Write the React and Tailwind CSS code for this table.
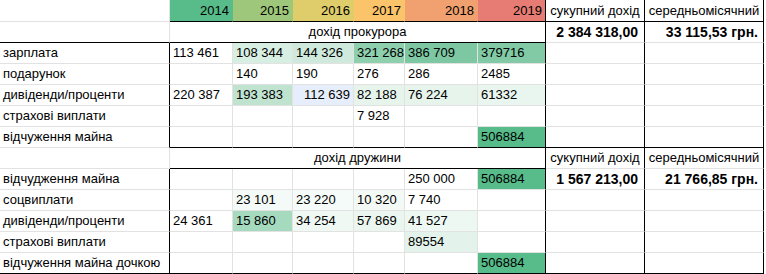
import React from 'react';

const years = [
  ['2014', 'bg-[#57bb8a]'],
  ['2015', 'bg-[#9ec77b]'],
  ['2016', 'bg-[#dfcd6b]'],
  ['2017', 'bg-[#fbc36a]'],
  ['2018', 'bg-[#f1a06f]'],
  ['2019', 'bg-[#e67c73]'],
];

// [text, bg, alignRight]
const prosecutor = [
  ['зарплата', [['113 461'], ['108 344', 'bg-[#d7eee2]'], ['144 326', 'bg-[#cfeadc]'], ['321 268', 'bg-[#8ecfae]'], ['386 709', 'bg-[#7dc8a2]'], ['379716', 'bg-[#82caa6]']]],
  ['подарунок', [[''], ['140'], ['190'], ['276'], ['286'], ['2485']]],
  ['дивіденди/проценти', [['220 387'], ['193 383', 'bg-[#c0e3d0]'], ['112 639', 'bg-[#e7eefb]', true], ['82 188', 'bg-[#e6f4ec]'], ['76 224', 'bg-[#e6f4ec]'], ['61332', 'bg-[#e9f5ef]']]],
  ['страхові виплати', [[''], [''], [''], ['7 928'], [''], ['']]],
  ['відчуження майна', [[''], [''], [''], [''], [''], ['506884', 'bg-[#57bb8a]']]],
];

const wife = [
  ['відчудження майна', [[''], [''], [''], [''], ['250 000'], ['506884', 'bg-[#57bb8a]']]],
  ['соцвиплати', [[''], ['23 101', 'bg-[#f4faf7]'], ['23 220', 'bg-[#f5fbf8]'], ['10 320', 'bg-[#f3faf6]'], ['7 740'], ['']]],
  ['дивіденди/проценти', [['24 361'], ['15 860', 'bg-[#a6dabe]'], ['34 254', 'bg-[#f0f8f4]'], ['57 869', 'bg-[#eaf6ef]'], ['41 527', 'bg-[#eef8f3]'], ['']]],
  ['страхові виплати', [[''], [''], [''], [''], ['89554', 'bg-[#e3f2ea]'], ['']]],
  ['відчуження майна дочкою', [[''], [''], [''], [''], [''], ['506884', 'bg-[#57bb8a]']]],
];

const Cell = ({ children, className = '', black = false, rightBlack = false, span = '' }) => (
  <div
    className={`flex items-center overflow-visible whitespace-nowrap border-b border-r ${
      black ? 'border-b-black' : 'border-b-[#e2e2e2]'
    } ${rightBlack ? 'border-r-black' : 'border-r-[#e2e2e2]'} ${span} ${className}`}
  >
    {children}
  </div>
);

const Summary = ({ total, monthly }) => (
  <>
    <Cell rightBlack className="justify-end pr-[6px] font-bold text-[14px]">{total}</Cell>
    <Cell rightBlack className="justify-end pr-[5px] font-bold text-[14px]">{monthly}</Cell>
  </>
);

const SummaryHead = ({ black }) => (
  <>
    <Cell black={black} rightBlack className="justify-center">сукупний дохід</Cell>
    <Cell black={black} rightBlack className="justify-center">середньомісячний</Cell>
  </>
);

// lastLine: 'none' | 'data' (cols 1..8) | 'all'
const DataRows = ({ rows, lastLine, summaryFirst }) =>
  rows.map(([label, cells], i) => {
    const last = i === rows.length - 1;
    const lineData = last && lastLine !== 'none';
    const lineLabel = last && lastLine === 'all';
    return (
      <React.Fragment key={label + i}>
        <Cell black={lineLabel} rightBlack className="pl-[3px]">{label}</Cell>
        {cells.map(([t, bg = 'bg-white', right], j) => (
          <Cell
            key={j}
            black={lineData}
            rightBlack={j === 5}
            className={`${bg} ${right ? 'justify-end pr-[3px]' : 'pl-[3px]'}`}
          >
            {t}
          </Cell>
        ))}
        {i === 0 && summaryFirst ? (
          <Summary total={summaryFirst[0]} monthly={summaryFirst[1]} />
        ) : (
          <>
            <Cell black={lineData} rightBlack />
            <Cell black={lineData} rightBlack />
          </>
        )}
      </React.Fragment>
    );
  });

export default function App() {
  return (
    <div className="w-[766px] h-[274px] bg-white overflow-hidden text-[13px] text-black font-['Liberation_Sans',Arial,sans-serif]">
      <div className="grid grid-cols-[170px_63px_60px_61px_51px_73px_68px_99px_119px] grid-rows-[22px_repeat(12,21px)]">
        {/* year header */}
        <Cell />
        {years.map(([y, bg], j) => (
          <Cell key={y} black rightBlack={j === 5} className={`${bg} justify-end pr-[3px] ${j === 5 ? '' : 'border-r-transparent'}`}>
            {y}
          </Cell>
        ))}
        <SummaryHead black />

        {/* prosecutor */}
        <Cell black />
        <Cell black rightBlack span="col-span-6" className="justify-center">дохід прокурора</Cell>
        <Summary total="2 384 318,00" monthly="33 115,53 грн." />
        <DataRows rows={prosecutor} lastLine="data" />

        {/* wife */}
        <Cell />
        <Cell black rightBlack span="col-span-6" className="justify-center">дохід дружини</Cell>
        <SummaryHead />
        <DataRows rows={wife} lastLine="all" summaryFirst={['1 567 213,00', '21 766,85 грн.']} />
      </div>
    </div>
  );
}
